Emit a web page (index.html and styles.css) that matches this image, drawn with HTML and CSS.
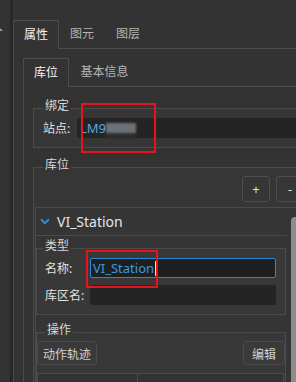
FILE: index.html
```html
<!DOCTYPE html>
<html lang="zh-CN">
<head>
    <meta charset="UTF-8">
    <title>库位属性</title>
    <link rel="stylesheet" href="styles.css">
</head>
<body>
    <div class="shell">
        <div class="gutter"><span class="nub"></span></div>
        <div class="splitter"></div>
        <div class="dock">
            <div class="tabs">
                <div class="tab active">属性</div>
                <div class="tab">图元</div>
                <div class="tab">图层</div>
                <div class="tab-fill"></div>
            </div>
            <div class="pane">
                <div class="tabs">
                    <div class="tab active">库位</div>
                    <div class="tab wide">基本信息</div>
                    <div class="tab-fill"></div>
                </div>
                <div class="pane inner">
                    <fieldset class="group bind">
                        <legend>绑定</legend>
                        <div class="row">
                            <label class="lbl short">站点:</label>
                            <div class="field">LM9<span class="mosaic"></span></div>
                        </div>
                    </fieldset>
                    <fieldset class="group slots">
                        <legend>库位</legend>
                        <div class="tools">
                            <button class="tool">+</button>
                            <button class="tool">-</button>
                        </div>
                        <div class="scroll">
                            <div class="scroll-body">
                                <div class="item-head">
                                    <svg class="chev" width="10" height="7" viewBox="0 0 10 7">
                                        <path d="M1 1.2 L5 5.2 L9 1.2" fill="none" stroke="#2b8fdc" stroke-width="2"/>
                                    </svg>
                                    <span>VI_Station</span>
                                </div>
                                <fieldset class="group sub">
                                    <legend>类型</legend>
                                    <div class="row">
                                        <label class="lbl">名称:</label>
                                        <div class="field focus">VI_Station<span class="caret"></span></div>
                                    </div>
                                    <div class="row">
                                        <label class="lbl">库区名:</label>
                                        <div class="field"></div>
                                    </div>
                                </fieldset>
                                <fieldset class="group sub ops">
                                    <legend>操作</legend>
                                    <div class="actions">
                                        <button class="btn">动作轨迹</button>
                                        <button class="btn">编辑</button>
                                    </div>
                                    <div class="grid">
                                        <div class="cell"></div>
                                        <div class="cell"></div>
                                    </div>
                                </fieldset>
                            </div>
                            <div class="vbar"><div class="handle"></div></div>
                        </div>
                    </fieldset>
                </div>
            </div>
        </div>
    </div>
    <!-- red markers drawn over the screenshot -->
    <div class="mark mark-station"></div>
    <div class="mark mark-name"></div>
</body>
</html>
```

FILE: styles.css
```css
body {
    margin: 0;
    width: 296px;
    height: 382px;
    overflow: hidden;
    position: relative;
    background: #333333;
    font-family: "Noto Sans", "Noto Sans CJK SC", sans-serif;
    font-size: 12px;
    color: #dcdcdc;
}
.shell {
    display: flex;
    width: 330px;
    height: 382px;
}
.gutter {
    width: 10px;
    padding-top: 28px;
    box-sizing: border-box;
}
.nub {
    display: block;
    width: 0;
    height: 0;
    margin-left: -3px;
    border-left: 3px solid transparent;
    border-right: 3px solid transparent;
    border-bottom: 3px solid #9a9a9a;
}
.splitter {
    width: 3px;
    background: #282828;
}
.dock {
    flex: 1;
    padding-top: 20px;
    display: flex;
    flex-direction: column;
}
.tabs {
    display: flex;
    height: 29px;
    flex: none;
}
.tab {
    width: 46px;
    box-sizing: border-box;
    border-bottom: 1px solid #4b4b4b;
    text-align: center;
    line-height: 28px;
    color: #b4b4b4;
}
.tab.active {
    border: 1px solid #4b4b4b;
    border-bottom: 0;
    line-height: 27px;
    color: #f4f4f4;
}
.tab.wide {
    width: 71px;
}
.tab-fill {
    flex: 1;
    border-bottom: 1px solid #4b4b4b;
}
.pane {
    flex: 1;
    border-left: 1px solid #4b4b4b;
    padding: 9px 0 0 9px;
    display: flex;
    flex-direction: column;
}
.pane.inner {
    display: block;
}
.group {
    margin: 0;
    min-width: 0;
    width: 281px;
    box-sizing: border-box;
    padding: 1px 9px 9px;
    border: 1px solid #4b4b4b;
    background: #363636;
}
.group legend {
    padding: 0 2px 5px;
    line-height: 12px;
    color: #d8d8d8;
}
.bind {
    margin-top: 4px;
}
.slots {
    margin-top: 11px;
    padding: 0 9px;
    height: 300px;
}
.row {
    display: flex;
    align-items: center;
    height: 20px;
}
.row + .row {
    margin-top: 7px;
}
.lbl {
    width: 45px;
    flex: none;
    color: #e2e2e2;
}
.lbl.short {
    width: 34px;
}
.field {
    flex: 1;
    height: 20px;
    box-sizing: border-box;
    padding-left: 3px;
    background: #242424;
    border-radius: 2px;
    line-height: 20px;
    font-size: 13px;
    color: #5ea7e0;
    white-space: nowrap;
}
.field.focus {
    border: 1px solid #2a88d2;
    padding-left: 2px;
    line-height: 18px;
    background: #1f1f1f;
    color: #3b99df;
}
.caret {
    display: inline-block;
    width: 1px;
    height: 15px;
    margin-left: 1px;
    vertical-align: -3px;
    background: #e0e0e0;
}
.mosaic {
    display: inline-block;
    width: 30px;
    height: 16px;
    vertical-align: -5px;
    background: linear-gradient(to bottom, transparent 0 1px, #6c7178 1px 11px, #2e2e2e 11px 16px);
    filter: blur(1px);
}
.tools {
    display: flex;
    justify-content: flex-end;
    gap: 6px;
}
.tool {
    width: 28px;
    height: 26px;
    padding: 0;
    background: #363636;
    border: 1px solid #4e4e4e;
    border-radius: 3px;
    color: #d2e6e0;
    font-family: "Noto Sans", sans-serif;
    font-size: 13px;
}
.scroll {
    display: flex;
    margin: 5px 0 0 -8px;
    border-top: 1px solid #4b4b4b;
    border-left: 1px solid #4b4b4b;
    background: #353535;
    height: 200px;
}
.scroll-body {
    width: 251px;
    flex: none;
}
.vbar {
    width: 10px;
    margin-left: 4px;
}
.handle {
    margin-top: 9px;
    height: 200px;
    background: #8c8c8c;
    border-radius: 4px 4px 0 0;
}
.item-head {
    display: flex;
    align-items: center;
    gap: 7px;
    height: 27px;
    padding-left: 4px;
    border-bottom: 1px solid #4b4b4b;
    font-size: 14px;
    color: #e6e6e6;
}
.sub {
    width: 250px;
    margin-top: 4px;
    padding: 1px 9px 9px 8px;
    background: #383838;
}
.sub legend {
    margin-left: -2px;
}
.ops {
    margin-top: 9px;
    padding: 0;
    height: 80px;
}
.ops legend {
    margin-left: 8px;
}
.actions {
    display: flex;
    justify-content: space-between;
}
.btn {
    height: 24px;
    padding: 0 5px;
    background: #3a3a3a;
    border: 1px solid #4a4a4a;
    border-radius: 3px;
    color: #d2d2d2;
    font-family: "Noto Sans CJK SC", sans-serif;
    font-size: 12px;
}
.btn:last-child {
    width: 42px;
    padding: 0;
}
.grid {
    display: grid;
    grid-template-columns: 100px 1fr;
    height: 20px;
    margin: 8px 1px 0 0;
    border-top: 1px solid #4b4b4b;
    border-left: 1px solid #4b4b4b;
    background: #333333;
}
.cell {
    border-right: 1px solid #4b4b4b;
}
.mark {
    position: absolute;
    box-sizing: border-box;
    border: 2px solid #e5141d;
}
.mark-station {
    left: 81px;
    top: 103px;
    width: 75px;
    height: 50px;
}
.mark-name {
    left: 86px;
    top: 250px;
    width: 72px;
    height: 38px;
}
```
